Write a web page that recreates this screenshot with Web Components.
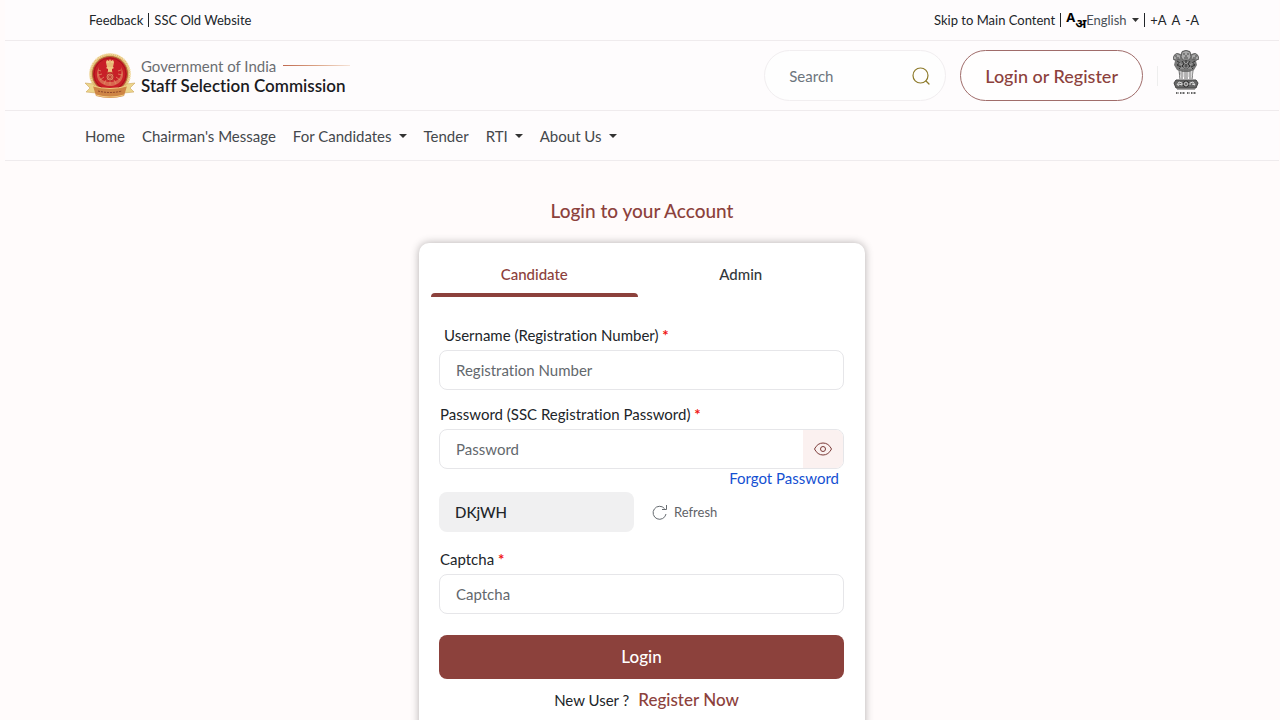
<!DOCTYPE html>
<html lang="en">
<head>
<meta charset="utf-8">
<meta name="viewport" content="width=device-width, initial-scale=1">
<title>Staff Selection Commission</title>
<style>
  html { scrollbar-width: none; }
  body {
    --brand: #8c413c;
    --line: #efebed;
    --bar: #fefcfd;
    margin: 0 1px 0 5px;
    background: #fffbfb;
    color: #212529;
    font: 15px/20px Lato, "Noto Sans", sans-serif;
    font-variant-ligatures: none;
  }
</style>
</head>
<body>
<ssc-topbar></ssc-topbar>
<ssc-header></ssc-header>
<ssc-nav>
  <ssc-nav-item>Home</ssc-nav-item>
  <ssc-nav-item>Chairman's Message</ssc-nav-item>
  <ssc-nav-item menu>For Candidates</ssc-nav-item>
  <ssc-nav-item>Tender</ssc-nav-item>
  <ssc-nav-item menu>RTI</ssc-nav-item>
  <ssc-nav-item menu>About Us</ssc-nav-item>
</ssc-nav>
<ssc-login>Login to your Account</ssc-login>

<script>
class SscTopbar extends HTMLElement {
  constructor() {
    super();
    this.attachShadow({ mode: 'open' });
    this.shadowRoot.innerHTML = `
      <style>
        :host {
          display: flex;
          justify-content: space-between;
          align-items: center;
          height: 40px;
          padding: 0 80px 0 84px;
          background: var(--bar);
          border-bottom: 1px solid var(--line);
          font-size: 13px;
        }
        .group { display: flex; align-items: center; gap: 5px; }
        a { color: inherit; text-decoration: none; }
        .bar { width: 1px; height: 14px; background: #212529; }
        .lang { display: flex; align-items: center; color: #495057; }
        .lang b { color: #000; font-family: "Noto Sans", sans-serif; font-size: 13px; line-height: 16px; padding-bottom: 6px; }
        .lang b + b { padding: 6px 0 0; }
        select {
          appearance: none;
          border: 0;
          padding: 0 14px 0 0;
          background: none;
          color: inherit;
          font: inherit;
        }
        .lang svg { margin-left: -9px; pointer-events: none; }
        .size { display: flex; gap: 5px; }
        button { border: 0; padding: 0; background: none; color: inherit; font: inherit; }
      </style>
      <div class="group">
        <a href="#feedback">Feedback</a>
        <span class="bar"></span>
        <a href="#old">SSC Old Website</a>
      </div>
      <div class="group">
        <a href="#main">Skip to Main Content</a>
        <span class="bar"></span>
        <div class="lang">
          <b>A</b><b>अ</b>
          <select aria-label="Language"><option>English</option></select>
          <svg width="7" height="4" viewBox="0 0 7 4"><path d="M0 0h7L3.500 4z" fill="#333"/></svg>
        </div>
        <span class="bar"></span>
        <div class="size">
          <button type="button">+A</button>
          <button type="button">A</button>
          <button type="button">-A</button>
        </div>
      </div>
    `;
  }
}
customElements.define('ssc-topbar', SscTopbar);

class SscSeal extends HTMLElement {
  constructor() {
    super();
    this.attachShadow({ mode: 'open' });
    this.shadowRoot.innerHTML = `
      <style>
        :host { display: block; }
        svg { display: block; }
      </style>
      <svg width="50" height="46" viewBox="0 0 50 46" fill="none">
        <circle cx="25" cy="21" r="20.500" fill="#e3bd74"/>
        <circle cx="25" cy="21" r="20" stroke="#f5e0ab" stroke-width="2" stroke-dasharray="1 1"/>
        <circle cx="25" cy="21" r="17.500" fill="#c81f27" stroke="#a96a35"/>
        <circle cx="25" cy="21" r="16" stroke="#a8131c"/>
        <path d="M14 14C8 25 16 33 25 33s17-8 11-19c2 10-3 15-11 15S12 24 14 14z" fill="#d9684f"/>
        <path d="M13 17l3 1m-3 4l4-1m-2 6l4-3m0 7l2-4m4 5v-4m6 3l-2-4m6 0l-4-3m6-2l-4-1m3-4l-3 1" stroke="#e39a6c" stroke-width=".7"/>
        <path d="M21 9l1-2 2 1 1-2 1 2 2-1 1 2-1 5 1 1-2 1v3h-4v-3l-2-1 1-1z" fill="#f0c783"/>
        <path d="M23 10v4m2-6v6m2-4v4M22 19h6" stroke="#d39a58" stroke-width=".6"/>
        <circle cx="25" cy="24" r="4" fill="#e08a66" stroke="#b92b29"/>
        <path d="M22 24h6m-3-3v6m-2-5l4 4m0-4l-4 4" stroke="#b92b29" stroke-width=".6"/>
        <path d="M0 30l9 1 2 9-10-1 4-4zM50 30l-9 1-2 9 10-1-4-4z" fill="#ecd58b" stroke="#c99b4d" stroke-width=".5"/>
        <path d="M8 33q17 5 34 0l-3 10q-14 4-28 0z" fill="#ce8545"/>
        <path d="M8 33q17 5 34 0M11 42q14 4 28 0" stroke="#f0cc82"/>
        <path d="M13 38q12 3 24 0" stroke="#8d442a" stroke-dasharray="2 1"/>
      </svg>
    `;
  }
}
customElements.define('ssc-seal', SscSeal);

class SscLions extends HTMLElement {
  constructor() {
    super();
    this.attachShadow({ mode: 'open' });
    this.shadowRoot.innerHTML = `
      <style>
        :host { display: block; }
        svg { display: block; }
      </style>
      <svg width="26" height="46" viewBox="0 0 26 46" fill="none">
        <path d="M8 4l1-3 4-1 4 1 1 3 4-1 3 2 1 4-3 2 1 4-3 5-5 2H9l-5-2-3-5 1-4-2-2 1-4 3-2z" fill="#777"/>
        <path d="M9 2q4-3 8 0l1 5-2 3h-6L8 7zM7 5Q3 2 1 6l-1 3 3 1 4-1M19 5q4-3 6 1l1 3-3 1-4-1" fill="#aaa" stroke="#555" stroke-width=".8"/>
        <path d="M10 4h2m2 0h2m-4 2h2m-3 2h4M2 6h2m18 0h2M3 8h3m14 0h3" stroke="#333" stroke-width=".8"/>
        <path d="M4 11l3 2-3 2 4 2-2 2M9 11l2 3-2 2 3 3M17 11l-2 3 2 2-3 3M22 11l-3 2 3 2-4 2 2 2M13 10v9" stroke="#333"/>
        <path d="M6 13l3 2m2-3l2 2 2-2m2 3l3-2M7 18h12" stroke="#b9b9b9" stroke-width=".7"/>
        <path d="M6 20l1 9m2-9v9m3-9v9m2-9v9m3-9v9m3-9l-1 9" stroke="#666"/>
        <path d="M8 21l-1 5m4-4v5m4-5v5m4-6v5" stroke="#bbb"/>
        <path d="M3 30h20l2 3-2 5H3l-2-5z" fill="#666" stroke="#444"/>
        <circle cx="13" cy="34" r="3" fill="#ddd" stroke="#333"/>
        <path d="M13 31v6m-3-3h6m-5-2l4 4m0-4l-4 4" stroke="#555" stroke-width=".6"/>
        <path d="M4 35l2-3 3 1v2l-3-1-1 2M17 35v-2l3-1 2 3-3-1" stroke="#ddd"/>
        <path d="M4 39h18" stroke="#555"/>
        <path d="M3 43h3m1 0h5m2 0h3m1 0h5" stroke="#666" stroke-width="2" stroke-dasharray="1 .5"/>
      </svg>
    `;
  }
}
customElements.define('ssc-lions', SscLions);

class SscHeader extends HTMLElement {
  constructor() {
    super();
    this.attachShadow({ mode: 'open' });
    this.shadowRoot.innerHTML = `
      <style>
        :host {
          display: flex;
          justify-content: space-between;
          align-items: center;
          padding: 9px 80px;
          background: var(--bar);
          border-bottom: 1px solid var(--line);
        }
        .brand, .tools { display: flex; align-items: center; }
        .brand { gap: 6px; color: inherit; text-decoration: none; }
        .gov { display: flex; align-items: center; gap: 7px; color: #6b6e72; }
        .gov i { width: 67px; height: 1px; background: linear-gradient(90deg, #c06a50, #dba385, #f6e4d8); }
        .name { font-size: 17px; font-weight: 600; color: #1b1b1f; }
        .tools { gap: 14px; }
        .search {
          display: flex;
          align-items: center;
          box-sizing: border-box;
          width: 182px;
          height: 51px;
          padding: 0 15px 0 24px;
          border: 1px solid #f1eef0;
          border-radius: 26px;
          background: #fefefe;
        }
        input { flex: 1; min-width: 0; border: 0; padding: 0; background: none; font: inherit; outline: 0; }
        input::placeholder { color: #6c757d; opacity: 1; }
        .search button { display: flex; border: 0; padding: 0; background: none; }
        .login {
          height: 51px;
          padding: 0 24px;
          border: 1px solid #a06c6a;
          border-radius: 26px;
          background: #fffefe;
          color: var(--brand);
          font: inherit;
          font-size: 18px;
          font-weight: 500;
        }
        .rule { width: 1px; height: 20px; margin-right: 1px; background: #eee; }
        ssc-lions { align-self: flex-start; }
      </style>
      <a class="brand" href="#home">
        <ssc-seal></ssc-seal>
        <div>
          <div class="gov">Government of India <i></i></div>
          <div class="name">Staff Selection Commission</div>
        </div>
      </a>
      <div class="tools">
        <div class="search">
          <input type="text" placeholder="Search" aria-label="Search">
          <button type="button" aria-label="Search">
            <svg width="18" height="18" viewBox="0 0 18 18" fill="none" stroke="#8d7a2a" stroke-width="1.200" stroke-linecap="round">
              <circle cx="8.500" cy="8.500" r="7.500"/><path d="M14 14l3 3"/>
            </svg>
          </button>
        </div>
        <button class="login" type="button">Login or Register</button>
        <span class="rule"></span>
        <ssc-lions></ssc-lions>
      </div>
    `;
  }
}
customElements.define('ssc-header', SscHeader);

class SscNav extends HTMLElement {
  constructor() {
    super();
    this.attachShadow({ mode: 'open' });
    this.shadowRoot.innerHTML = `
      <style>
        :host { display: block; background: var(--bar); border-bottom: 1px solid var(--line); }
        nav { display: flex; align-items: center; gap: 17px; height: 49px; padding: 0 80px; }
      </style>
      <nav><slot></slot></nav>
    `;
  }
}
customElements.define('ssc-nav', SscNav);

class SscNavItem extends HTMLElement {
  constructor() {
    super();
    this.attachShadow({ mode: 'open' });
    const style = `
      <style>
        :host { display: block; color: #44484c; }
        a, button {
          display: flex;
          align-items: center;
          gap: 7px;
          border: 0;
          padding: 0;
          background: none;
          color: inherit;
          font: inherit;
          text-decoration: none;
        }
      </style>
    `;
    this.shadowRoot.innerHTML = style + (this.hasAttribute('menu')
      ? `<button type="button"><slot></slot><svg width="8" height="4" viewBox="0 0 8 4"><path d="M0 0h8L4 4z" fill="#333"/></svg></button>`
      : `<a href="#"><slot></slot></a>`);
  }
}
customElements.define('ssc-nav-item', SscNavItem);

class SscField extends HTMLElement {
  constructor() {
    super();
    this.attachShadow({ mode: 'open' });
    this.shadowRoot.innerHTML = `
      <style>
        :host { display: block; }
        label { display: block; margin-bottom: 5px; padding-left: var(--label-indent, 1px); }
        .star { color: #f01414; font-weight: 700; }
        .box {
          display: flex;
          box-sizing: border-box;
          height: 40px;
          overflow: hidden;
          border: 1px solid #e6e6e9;
          border-radius: 8px;
          background: #fff;
        }
        input { flex: 1; min-width: 0; border: 0; padding: 0 16px; background: none; font: inherit; outline: 0; }
        input::placeholder { color: #63686d; opacity: 1; }
      </style>
      <label for="input"><slot></slot> <span class="star">*</span></label>
      <div class="box">
        <input id="input" type="${this.getAttribute('type') || 'text'}" placeholder="${this.getAttribute('placeholder')}">
        <slot name="action"></slot>
      </div>
    `;
  }
}
customElements.define('ssc-field', SscField);

class SscLogin extends HTMLElement {
  constructor() {
    super();
    this.attachShadow({ mode: 'open' });
    this.shadowRoot.innerHTML = `
      <style>
        :host { display: block; padding: 38px 0 24px; }
        h1 { margin: 0 0 20px; color: var(--brand); font-size: 19px; line-height: 24px; font-weight: 500; text-align: center; }
        .card {
          box-sizing: border-box;
          max-width: 446px;
          margin: 0 auto;
          padding: 12px 21px 32px 12px;
          border-radius: 10px;
          background: #fff;
          box-shadow: 0 0 8px rgba(0, 0, 0, .3);
        }
        .tabs { display: grid; grid-template-columns: 1fr 1fr; }
        .tabs button {
          height: 38px;
          border: 0;
          padding: 0;
          background: none;
          color: #33373b;
          font: inherit;
          font-weight: 500;
        }
        .tabs .on { color: var(--brand); }
        .line { width: 50%; height: 4px; border-radius: 4px 4px 0 0; background: var(--brand); }
        form { display: flex; flex-direction: column; padding: 28px 0 0 8px; }
        .user { --label-indent: 5px; margin-bottom: 14px; }
        .eye {
          display: flex;
          align-items: center;
          justify-content: center;
          width: 40px;
          border: 0;
          padding: 0;
          background: #fbf1f0;
        }
        a { text-decoration: none; }
        .forgot { align-self: flex-end; margin-right: 5px; color: #1450d2; line-height: 18px; }
        .code { display: flex; align-items: center; gap: 18px; margin: 5px 0 17px; }
        .code output {
          box-sizing: border-box;
          width: 195px;
          padding: 10px 16px;
          border-radius: 8px;
          background: #f0f0f1;
          font-weight: 500;
        }
        .refresh { display: flex; align-items: center; gap: 7px; border: 0; padding: 0; background: none; color: #5f6368; font: inherit; font-size: 13px; }
        .submit {
          height: 44px;
          margin: 21px 0 11px;
          border: 0;
          border-radius: 8px;
          background: var(--brand);
          color: #fff;
          font: inherit;
          font-size: 17px;
          font-weight: 500;
        }
        .new { display: flex; justify-content: center; align-items: center; gap: 9px; padding-left: 10px; }
        .new a { color: var(--brand); font-size: 17px; font-weight: 500; }
      </style>
      <h1><slot></slot></h1>
      <div class="card">
        <div class="tabs">
          <button class="on" type="button">Candidate</button>
          <button type="button">Admin</button>
        </div>
        <div class="line"></div>
        <form>
          <ssc-field class="user" placeholder="Registration Number">Username (Registration Number)</ssc-field>
          <ssc-field type="password" placeholder="Password">Password (SSC Registration Password)
            <button class="eye" slot="action" type="button" aria-label="Show password">
              <svg width="18" height="14" viewBox="0 0 18 14" fill="none" stroke="#7b3b38">
                <path d="M.5 7Q3.500 1 9 1t8.500 6q-3 6-8.500 6T.5 7z"/><circle cx="9" cy="7" r="2.500"/>
              </svg>
            </button>
          </ssc-field>
          <a class="forgot" href="#forgot">Forgot Password</a>
          <div class="code">
            <output>DKjWH</output>
            <button class="refresh" type="button">
              <svg width="15" height="15" viewBox="0 0 15 15" fill="none" stroke="#666b70">
                <path d="M14 9A6.500 6.500 0 1 1 12.500 3.500M14.500 0v4.500H10"/>
              </svg>
              Refresh
            </button>
          </div>
          <ssc-field placeholder="Captcha">Captcha</ssc-field>
          <button class="submit" type="button">Login</button>
          <div class="new">New User ? <a href="#register">Register Now</a></div>
        </form>
      </div>
    `;
  }
}
customElements.define('ssc-login', SscLogin);
</script>
</body>
</html>
